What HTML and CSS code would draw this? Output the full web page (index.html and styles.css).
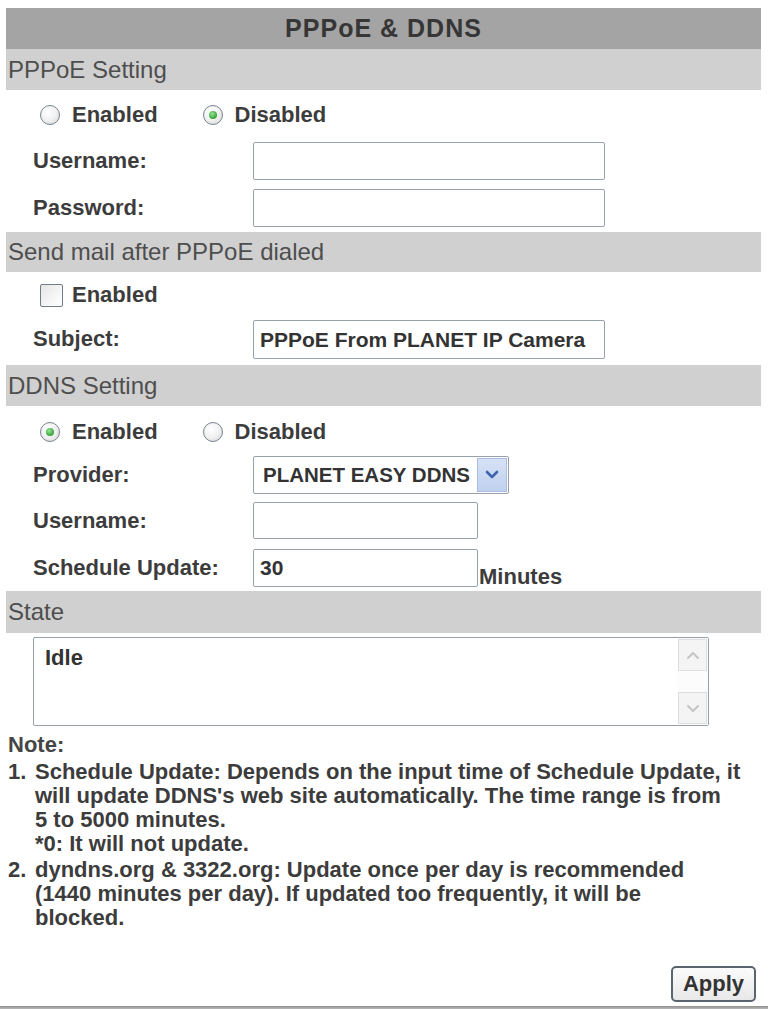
FILE: index.html
```html
<!DOCTYPE html>
<html>
<head>
<meta charset="utf-8">
<title>PPPoE &amp; DDNS</title>
<link rel="stylesheet" href="styles.css">
</head>
<body>
<div class="page">
  <div class="panel">
    <div class="title">PPPoE &amp; DDNS</div>

    <div class="sec">PPPoE Setting</div>
    <div class="radios h50">
      <span class="radio"></span><span class="opt">Enabled</span>
      <span class="radio on second"></span><span class="opt">Disabled</span>
    </div>
    <div class="row h47">
      <span class="lbl">Username:</span>
      <input class="field w352" type="text" value="">
    </div>
    <div class="row h45">
      <span class="lbl">Password:</span>
      <input class="field w352" type="password" value="">
    </div>

    <div class="sec h40">Send mail after PPPoE dialed</div>
    <div class="checks">
      <span class="check"></span><span class="opt">Enabled</span>
    </div>
    <div class="row h47">
      <span class="lbl">Subject:</span>
      <input class="field w352 tall" type="text" value="PPPoE From PLANET IP Camera">
    </div>

    <div class="sec">DDNS Setting</div>
    <div class="radios h48">
      <span class="radio on"></span><span class="opt">Enabled</span>
      <span class="radio second"></span><span class="opt">Disabled</span>
    </div>
    <div class="row h46">
      <span class="lbl">Provider:</span>
      <div class="select">
        <span class="sel-text">PLANET EASY DDNS</span>
        <span class="sel-btn">
          <svg width="14" height="10" viewBox="0 0 14 10"><path d="M2 2 L7 7 L12 2" fill="none" stroke="#3f63ad" stroke-width="2.6" stroke-linecap="round" stroke-linejoin="round"/></svg>
        </span>
      </div>
    </div>
    <div class="row h47">
      <span class="lbl">Username:</span>
      <input class="field w225 short" type="text" value="">
    </div>
    <div class="row h44">
      <span class="lbl">Schedule Update:</span>
      <input class="field w225" type="text" value="30">
      <span class="unit">Minutes</span>
    </div>

    <div class="sec h42">State</div>
    <div class="state-wrap">
      <div class="state">
        <div class="state-text">Idle</div>
        <div class="scroll">
          <span class="sb-btn">
            <svg width="14" height="9" viewBox="0 0 14 9"><path d="M2 7 L7 2 L12 7" fill="none" stroke="#c4c4c4" stroke-width="2" stroke-linecap="round" stroke-linejoin="round"/></svg>
          </span>
          <span class="sb-track"></span>
          <span class="sb-btn">
            <svg width="14" height="9" viewBox="0 0 14 9"><path d="M2 2 L7 7 L12 2" fill="none" stroke="#c4c4c4" stroke-width="2" stroke-linecap="round" stroke-linejoin="round"/></svg>
          </span>
        </div>
      </div>
    </div>

    <div class="note">
      <div class="note-head">Note:</div>
      <div class="item first">
        <span class="num">1.</span>
        <span class="txt">Schedule Update: Depends on the input time of Schedule Update, it<br>will update DDNS's web site automatically. The time range is from<br>5 to 5000 minutes.<br>*0: It will not update.</span>
      </div>
      <div class="item">
        <span class="num">2.</span>
        <span class="txt">dyndns.org &amp; 3322.org: Update once per day is recommended<br>(1440 minutes per day). If updated too frequently, it will be<br>blocked.</span>
      </div>
    </div>

    <div class="actions">
      <button class="apply" type="button">Apply</button>
    </div>
  </div>
  <div class="rule"></div>
</div>
</body>
</html>
```

FILE: styles.css
```css
html, body {
  margin: 0;
  padding: 0;
  background: #ffffff;
}

body {
  font-family: "Liberation Sans", Arial, sans-serif;
  color: #3a3a3a;
}

.page {
  padding-top: 8px;
  width: 768px;
}

.panel {
  margin-left: 6px;
  width: 755px;
}

.title {
  height: 41px;
  line-height: 41px;
  background: #a4a4a4;
  text-align: center;
  font-size: 25px;
  font-weight: bold;
  letter-spacing: 1px;
  color: #363636;
}

.sec {
  height: 41px;
  line-height: 41px;
  background: #d0d0d0;
  padding-left: 2px;
  font-size: 24px;
  color: #4e4e4e;
}

.sec.h40 { height: 40px; line-height: 40px; }
.sec.h42 { height: 42px; line-height: 42px; }

.radios {
  display: flex;
  align-items: center;
  padding-left: 34px;
  box-sizing: border-box;
}

.radios.h50 { height: 50px; }
.radios.h48 { height: 48px; padding-top: 4px; }

.opt {
  font-size: 22px;
  font-weight: bold;
  color: #3c3c3c;
  line-height: 24px;
}

.radio {
  position: relative;
  width: 20px;
  height: 20px;
  box-sizing: border-box;
  border: 1px solid #7a838e;
  border-radius: 50%;
  background: radial-gradient(circle at 40% 35%, #ffffff 0%, #f1f1f1 50%, #d4d4d4 100%);
  margin-right: 12px;
  flex: none;
}

.radio.second {
  margin-left: 45px;
}

.radio.on::after {
  content: "";
  position: absolute;
  left: 5px;
  top: 5px;
  width: 8px;
  height: 8px;
  border-radius: 50%;
  background: radial-gradient(circle at 40% 35%, #9be39b 0%, #3fae3f 60%, #2a8a2a 100%);
}

.checks {
  display: flex;
  align-items: center;
  height: 46px;
  padding-left: 34px;
}

.check {
  width: 23px;
  height: 23px;
  box-sizing: border-box;
  border: 1px solid #747c86;
  border-radius: 2px;
  background: linear-gradient(135deg, #e4e4e4 0%, #f6f6f6 60%, #ffffff 100%);
  margin-right: 9px;
  flex: none;
}

.row {
  display: flex;
  align-items: flex-start;
  padding-left: 27px;
  padding-top: 2px;
  box-sizing: border-box;
}

.row.h44 { height: 44px; }
.row.h45 { height: 45px; }
.row.h46 { height: 46px; }
.row.h47 { height: 47px; }

.lbl {
  width: 220px;
  flex: none;
  height: 38px;
  line-height: 38px;
  font-size: 22px;
  font-weight: bold;
  color: #3c3c3c;
}

.field {
  height: 38px;
  box-sizing: border-box;
  margin: 0;
  border: 1px solid #98a0aa;
  border-radius: 2px;
  background: #ffffff;
  padding: 0 6px;
  font-family: "Liberation Sans", Arial, sans-serif;
  font-size: 21px;
  font-weight: bold;
  color: #333333;
  outline: none;
}

.field.tall { height: 39px; }
.field.short { height: 37px; }

.w352 { width: 352px; }
.w225 { width: 225px; }

.unit {
  align-self: flex-end;
  margin-left: 1px;
  font-size: 22px;
  font-weight: bold;
  line-height: 24px;
  color: #3c3c3c;
  margin-bottom: 2px;
}

.select {
  display: flex;
  align-items: center;
  width: 256px;
  height: 38px;
  box-sizing: border-box;
  border: 1px solid #98a0aa;
  border-radius: 2px;
  background: #ffffff;
  padding-left: 9px;
  padding-right: 1px;
}

.sel-text {
  flex: 1;
  font-size: 20.5px;
  font-weight: bold;
  color: #333333;
  white-space: nowrap;
}

.sel-btn {
  width: 30px;
  height: 34px;
  box-sizing: border-box;
  border: 1px solid #a9bde0;
  background: linear-gradient(#d6e2f6, #c0d1ee);
  display: flex;
  align-items: center;
  justify-content: center;
}

.state-wrap {
  padding-top: 4px;
  padding-left: 27px;
}

.state {
  display: flex;
  width: 676px;
  height: 89px;
  box-sizing: border-box;
  border: 1px solid #98a0aa;
  border-radius: 2px;
  background: #ffffff;
}

.state-text {
  flex: 1;
  padding: 8px 11px;
  font-size: 22px;
  font-weight: bold;
  line-height: 24px;
  color: #333333;
}

.scroll {
  width: 30px;
  display: flex;
  flex-direction: column;
  padding: 1px 1px 1px 0;
  box-sizing: border-box;
  background: #fbfbfb;
}

.sb-btn {
  height: 32px;
  box-sizing: border-box;
  border: 1px solid #dedede;
  background: #f4f4f4;
  display: flex;
  align-items: center;
  justify-content: center;
}

.sb-track {
  flex: 1;
  background: #fcfcfc;
}

.note {
  margin-top: 7px;
  padding-left: 2px;
  font-size: 22px;
  font-weight: bold;
  line-height: 24px;
  color: #3c3c3c;
}

.note-head {
  margin-bottom: 3px;
  color: #454545;
}

.item {
  display: flex;
  white-space: nowrap;
}

.item.first {
  margin-bottom: 2px;
}

.num {
  width: 27px;
  flex: none;
}

.actions {
  display: flex;
  justify-content: flex-end;
  margin-top: 36px;
  padding-right: 5px;
}

.apply {
  width: 85px;
  height: 36px;
  box-sizing: border-box;
  border: 2px solid #5a6470;
  border-radius: 5px;
  background: linear-gradient(#fbfbfb, #e8e8e8);
  font-family: "Liberation Sans", Arial, sans-serif;
  font-size: 22px;
  font-weight: bold;
  color: #333333;
  padding: 0;
}

.rule {
  margin-top: 4px;
  height: 3px;
  background: linear-gradient(#8e8e8e, #b8b8b8);
}
```
